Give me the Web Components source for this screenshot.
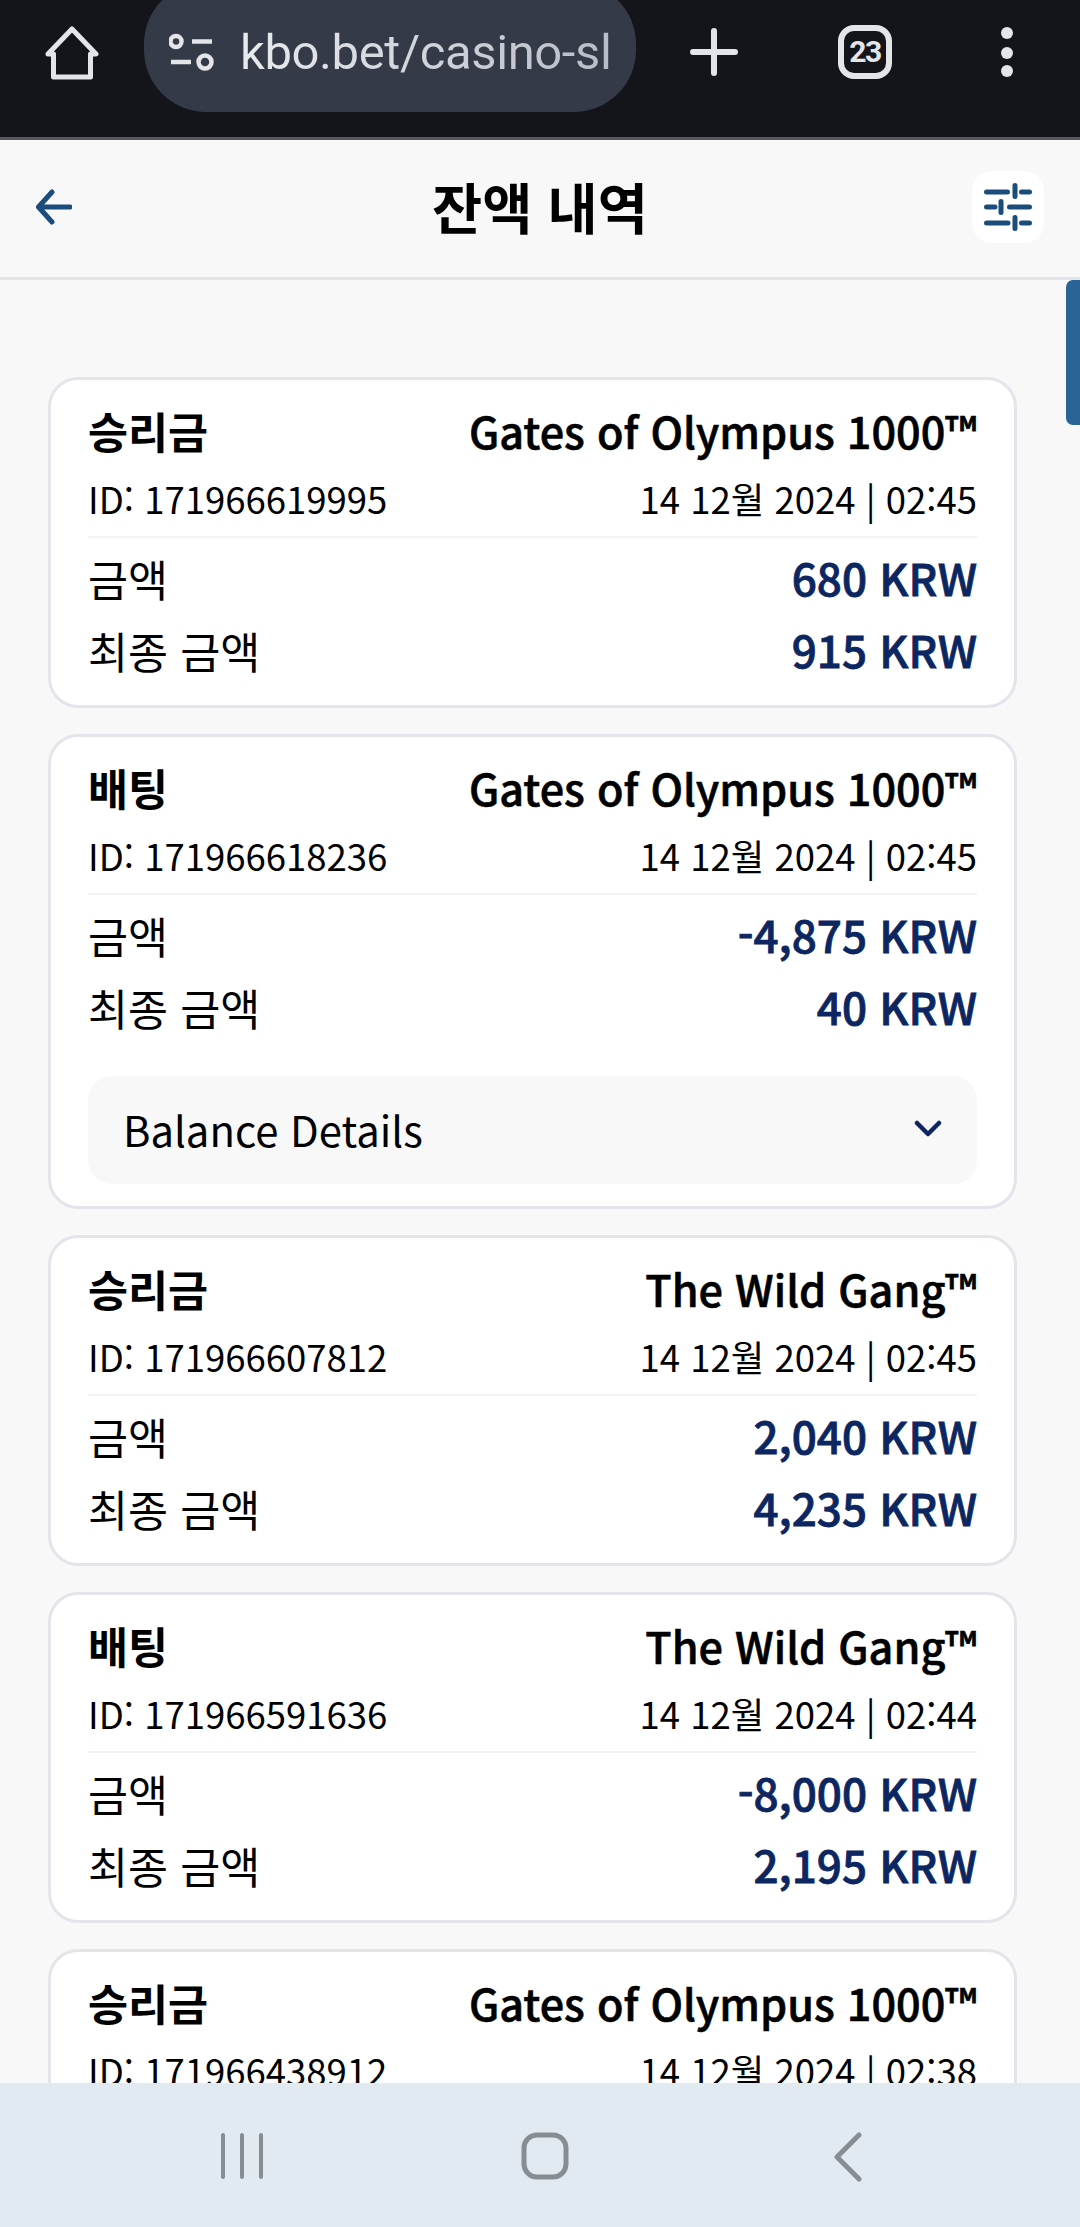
<!DOCTYPE html>
<html lang="ko">
<head>
<meta charset="utf-8">
<title>잔액 내역</title>
<style>
  html, body { margin: 0; padding: 0; height: 100%; }
  body {
    overflow: hidden;
    font-family: "Noto Sans CJK KR", "Noto Sans", sans-serif;
    background: #f8f8f9;
    display: flex;
    flex-direction: column;
    height: 2227px;
  }
</style>
</head>
<body>
<browser-bar url="kbo.bet/casino-sl" tabs="23"></browser-bar>
<page-header>잔액 내역</page-header>
<balance-list>
  <balance-card kind="승리금" game="Gates of Olympus 1000™" tx="171966619995" time="14 12월 2024 | 02:45" amount="680 KRW" total="915 KRW"></balance-card>
  <balance-card kind="배팅" game="Gates of Olympus 1000™" tx="171966618236" time="14 12월 2024 | 02:45" amount="-4,875 KRW" total="40 KRW">
    <balance-details>Balance Details</balance-details>
  </balance-card>
  <balance-card kind="승리금" game="The Wild Gang™" tx="171966607812" time="14 12월 2024 | 02:45" amount="2,040 KRW" total="4,235 KRW"></balance-card>
  <balance-card kind="배팅" game="The Wild Gang™" tx="171966591636" time="14 12월 2024 | 02:44" amount="-8,000 KRW" total="2,195 KRW"></balance-card>
  <balance-card kind="승리금" game="Gates of Olympus 1000™" tx="171966438912" time="14 12월 2024 | 02:38"></balance-card>
</balance-list>
<nav-bar></nav-bar>

<script>
class BrowserBar extends HTMLElement {
  connectedCallback() {
    const root = this.attachShadow({mode: 'open'})
    root.innerHTML = `
      <style>
        :host { display: block; flex: none; height: 137px; background: #13151a; border-bottom: 3px solid #55585e; overflow: hidden; }
        .bar { display: flex; align-items: flex-start; height: 100%; }
        svg { display: block; flex: none; }
        .home { margin: 26px 0 0 45px; }
        .pill {
          flex: none; box-sizing: border-box; width: 492px; height: 130px; margin: -18px 0 0 45px;
          background: #353a48; border-radius: 62px;
          display: flex; align-items: flex-start; padding: 45px 0 0 25px; gap: 25px; white-space: nowrap;
        }
        .pill svg { margin-top: 6px; }
        .pill span {
          font: 400 49px/52px Roboto, sans-serif; letter-spacing: -0.4px;
          color: transparent; background: linear-gradient(90deg, #e9eaee, #b9bdc8); -webkit-background-clip: text; background-clip: text;
        }
        .plus { margin: 28px 0 0 54px; }
        .tabs { margin: 25px 0 0 100px; box-sizing: border-box; width: 54px; height: 54px; border: 6px solid #e4e5e8; border-radius: 16px;
          color: #e4e5e8; font: 700 30px/42px Roboto, sans-serif; letter-spacing: -1.500px; text-align: center; }
        .dots { margin: 27px 0 0 108px; }
      </style>
      <div class="bar">
        <svg class="home" width="54" height="54" viewBox="0 0 54 54" fill="none" stroke="#e4e5e8" stroke-width="5" stroke-linejoin="round" stroke-linecap="round">
          <path d="M3 28 27 3l24 25h-5.500v23H8.500V28Z"/>
        </svg>
        <div class="pill">
          <svg width="46" height="38" viewBox="0 0 46 38" fill="none" stroke="#e4e5e8" stroke-width="4.500">
            <circle cx="7" cy="8.500" r="5.500"/><path d="M23 8.500h20M2 29h20"/><circle cx="36" cy="29" r="6.500"/>
          </svg>
          <span>${this.getAttribute('url')}</span>
        </div>
        <svg class="plus" width="48" height="48" viewBox="0 0 48 48" stroke="#e4e5e8" stroke-width="6" stroke-linecap="round">
          <path d="M24 3v42M3 24h42"/>
        </svg>
        <div class="tabs">${this.getAttribute('tabs')}</div>
        <svg class="dots" width="14" height="50" viewBox="0 0 14 50" fill="#e4e5e8">
          <circle cx="7" cy="6" r="6"/><circle cx="7" cy="26" r="6"/><circle cx="7" cy="44" r="6"/>
        </svg>
      </div>`
  }
}
customElements.define('browser-bar', BrowserBar)

class PageHeader extends HTMLElement {
  connectedCallback() {
    const root = this.attachShadow({mode: 'open'})
    root.innerHTML = `
      <style>
        :host { display: block; flex: none; background: #f8f8f9; border-bottom: 3px solid #e3e5ea; }
        .row { height: 134px; display: flex; align-items: center; justify-content: space-between; padding: 0 36px 3px; }
        .side { width: 72px; }
        h1 { margin: 0; font-size: 54.500px; font-weight: 700; color: #000; line-height: 1; position: relative; top: -1px; }
        .filter { width: 72px; height: 72px; background: #fff; border-radius: 20px; display: flex; align-items: center; justify-content: center; }
        svg { display: block; }
      </style>
      <div class="row">
        <div class="side">
          <svg width="36" height="36" viewBox="0 0 36 36" fill="none" stroke="#1a4d7c" stroke-width="5" stroke-linecap="round" stroke-linejoin="round">
            <path d="M16 3 2.500 18 16 33M3 18h31"/>
          </svg>
        </div>
        <h1><slot></slot></h1>
        <div class="filter">
          <svg width="48" height="48" viewBox="0 0 48 48" fill="none" stroke="#1a4d7c" stroke-width="5" stroke-linecap="round">
            <path d="M2.500 9H23.500M31 2.500V13.500M37.500 9H45.500M2.500 24H11M17 18.500V29.500M25.500 24H45.500M2.500 40H24M31 34.500V45.500M37.500 40H45.500"/>
          </svg>
        </div>
      </div>`
  }
}
customElements.define('page-header', PageHeader)

class BalanceList extends HTMLElement {
  connectedCallback() {
    const root = this.attachShadow({mode: 'open'})
    root.innerHTML = `
      <style>
        :host { display: block; flex: 1; min-height: 0; overflow: hidden; position: relative; }
        .list { display: flex; flex-direction: column; gap: 26px; padding: 97px 63px 0 48px; }
        .thumb { position: absolute; right: 0; top: 0; width: 14px; height: 145px; background: #2a6496; border-radius: 7px 0 0 7px; }
      </style>
      <div class="list"><slot></slot></div>
      <div class="thumb"></div>`
  }
}
customElements.define('balance-list', BalanceList)

class BalanceCard extends HTMLElement {
  connectedCallback() {
    const attr = (n) => this.getAttribute(n)
    const amounts = attr('amount') ? `
      <div class="row val first"><span>금액</span><b>${attr('amount')}</b></div>
      <div class="row val"><span>최종 금액</span><b>${attr('total')}</b></div>` : ''
    const root = this.attachShadow({mode: 'open'})
    root.innerHTML = `
      <style>
        :host { display: block; flex: none; background: #fff; border: 3px solid #e3e5ea; border-radius: 30px; padding: 0 37px 19px; color: #000; }
        .row { display: flex; justify-content: space-between; align-items: center; white-space: nowrap; }
        .head { height: 74px; padding-top: 13px; font-size: 43.500px; }
        .head b { font-weight: 700; }
        .head span { font-weight: 500; font-size: 43.200px; -webkit-text-stroke: 0.6px #000; }
        .meta { height: 62px; font-size: 36.500px; padding-bottom: 7px; border-bottom: 2px solid #f2f3f5; }
        .val { height: 72px; font-size: 43.500px; }
        .val b { font-weight: 500; color: #0c2661; font-size: 44px; -webkit-text-stroke: 0.8px #0c2661; padding-bottom: 2px; }
        .first { margin-top: 4px; }
        ::slotted(balance-details) { margin: 33px 0 3px; }
      </style>
      <div class="row head"><b>${attr('kind')}</b><span>${attr('game')}</span></div>
      <div class="row meta"><span>ID: ${attr('tx')}</span><span>${attr('time')}</span></div>
      ${amounts}
      <slot></slot>`
  }
}
customElements.define('balance-card', BalanceCard)

class BalanceDetails extends HTMLElement {
  connectedCallback() {
    const root = this.attachShadow({mode: 'open'})
    root.innerHTML = `
      <style>
        :host { display: flex; align-items: center; justify-content: space-between; height: 108px; background: #f8f8f9; border-radius: 24px; padding: 0 34px 2px 35px; box-sizing: border-box; font-size: 41.800px; color: #000; }
        svg { display: block; }
      </style>
      <span><slot></slot></span>
      <svg width="30" height="18" viewBox="0 0 30 18" fill="none" stroke="#0c2661" stroke-width="4.500" stroke-linecap="round" stroke-linejoin="round">
        <path d="M4 3 15 14 26 3"/>
      </svg>`
  }
}
customElements.define('balance-details', BalanceDetails)

class NavBar extends HTMLElement {
  connectedCallback() {
    const root = this.attachShadow({mode: 'open'})
    root.innerHTML = `
      <style>
        :host { display: block; flex: none; height: 144px; background: #e2eaf1; }
        .row { display: flex; align-items: flex-start; padding: 49px 0 0 220px; }
        svg { display: block; flex: none; }
        .home { margin-left: 257px; }
        .back { margin-left: 264px; }
      </style>
      <div class="row">
        <svg width="44" height="48" viewBox="0 0 44 48" stroke="#868d93" stroke-width="4" stroke-linecap="round">
          <path d="M3 3v42M22 3v42M41 3v42"/>
        </svg>
        <svg class="home" width="48" height="48" viewBox="0 0 48 48" fill="none" stroke="#868d93" stroke-width="5">
          <rect x="3" y="3" width="42" height="42" rx="13"/>
        </svg>
        <svg class="back" width="30" height="50" viewBox="0 0 30 50" fill="none" stroke="#868d93" stroke-width="5" stroke-linecap="round" stroke-linejoin="round">
          <path d="M26 3 4 25l22 22"/>
        </svg>
      </div>`
  }
}
customElements.define('nav-bar', NavBar)
</script>
</body>
</html>
